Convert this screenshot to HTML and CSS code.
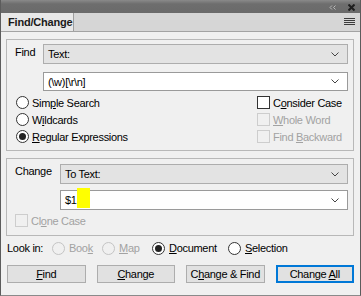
FILE: index.html
```html
<!DOCTYPE html>
<html>
  <head>
    <meta name="viewport" content="width=device-width, initial-scale=1.0" />
    <link rel="stylesheet" href="styles.css">
  </head>
  <body>
    <div class="panel">
      <div class="titlebar">
        <svg class="collapse" width="7" height="5" viewBox="0 0 7 5">
          <polyline points="3,0.5 1,2.5 3,4.5" fill="none" stroke="#b9b9b9" stroke-width="1" />
          <polyline points="6.5,0.5 4.5,2.5 6.5,4.5" fill="none" stroke="#b9b9b9" stroke-width="1" />
        </svg>
        <svg class="close" width="7" height="7" viewBox="0 0 7 7">
          <path d="M0.5 0.5 L6.5 6.5 M6.5 0.5 L0.5 6.5" stroke="#1e1e1e" stroke-width="2" />
        </svg>
      </div>
      <div class="tabbar">
        <div class="tab">Find/Change</div>
        <svg class="menu" width="11" height="8" viewBox="0 0 11 8">
          <path d="M0 0.5 H11 M0 2.5 H11 M0 4.5 H11 M0 6.5 H11" stroke="#3c3c3c" stroke-width="1" />
        </svg>
      </div>

      <div class="content">
        <div class="group find-group">
          <div class="field-row">
            <span class="group-label">Find</span>
            <div class="fields">
              <div class="combo combo-grey">
                <span>Text:</span>
                <svg class="chevron" width="8" height="5" viewBox="0 0 8 5"><polyline points="0.5,0.5 4,4 7.5,0.5" fill="none" stroke="#444" /></svg>
              </div>
              <div class="combo combo-white find-input">
                <span>(\w)[\r\n]</span>
                <svg class="chevron" width="8" height="5" viewBox="0 0 8 5"><polyline points="0.5,0.5 4,4 7.5,0.5" fill="none" stroke="#444" /></svg>
              </div>
            </div>
          </div>
          <div class="options">
            <div class="option-col">
              <div class="opt"><span class="radio"></span><span>Sim<u>p</u>le Search</span></div>
              <div class="opt"><span class="radio"></span><span>W<u>i</u>ldcards</span></div>
              <div class="opt"><span class="radio checked"></span><span><u>R</u>egular Expressions</span></div>
            </div>
            <div class="option-col check-col">
              <div class="opt"><span class="check"></span><span>C<u>o</u>nsider Case</span></div>
              <div class="opt disabled"><span class="check"></span><span><u>W</u>hole Word</span></div>
              <div class="opt disabled"><span class="check"></span><span>Find <u>B</u>ackward</span></div>
            </div>
          </div>
        </div>

        <div class="group change-group">
          <div class="field-row">
            <span class="group-label">Change</span>
            <div class="fields">
              <div class="combo combo-grey">
                <span>To Text:</span>
                <svg class="chevron" width="8" height="5" viewBox="0 0 8 5"><polyline points="0.5,0.5 4,4 7.5,0.5" fill="none" stroke="#444" /></svg>
              </div>
              <div class="combo combo-white change-input">
                <span class="input-text">$1<span class="highlight"></span></span>
                <svg class="chevron" width="8" height="5" viewBox="0 0 8 5"><polyline points="0.5,0.5 4,4 7.5,0.5" fill="none" stroke="#444" /></svg>
              </div>
            </div>
          </div>
          <div class="opt disabled clone"><span class="check"></span><span>Cl<u>o</u>ne Case</span></div>
        </div>

        <div class="look-in">
          <span class="look-label">Look in:</span>
          <div class="opt disabled book"><span class="radio"></span><span>Boo<u>k</u></span></div>
          <div class="opt disabled map"><span class="radio"></span><span><u>M</u>ap</span></div>
          <div class="opt doc"><span class="radio checked"></span><span><u>D</u>ocument</span></div>
          <div class="opt"><span class="radio"></span><span><u>S</u>election</span></div>
        </div>

        <div class="buttons">
          <div class="btn"><span><u>F</u>ind</span></div>
          <div class="btn"><span><u>C</u>hange</span></div>
          <div class="btn"><span>C<u>h</u>ange &amp; Find</span></div>
          <div class="btn default"><span>Change <u>A</u>ll</span></div>
        </div>
      </div>
    </div>
  </body>
</html>
```

FILE: styles.css
```css
body {
  margin: 0;
  background: #f0f0f0;
  font-family: "Liberation Sans", Arial, sans-serif;
  font-size: 11px;
  letter-spacing: -0.3px;
  color: #000;
}
u {
  text-decoration: underline;
  text-underline-offset: 1px;
}
.panel {
  width: 361px;
  height: 296px;
  box-sizing: border-box;
  border-left: 1px solid #5c5c5c;
  border-right: 1px solid #5c5c5c;
  border-bottom: 1px solid #8a8a8a;
  background: #f0f0f0;
}
.titlebar {
  height: 13px;
  background: linear-gradient(#8a8a8a, #6e6e6e 30%, #6a6a6a);
  display: flex;
  align-items: center;
  justify-content: flex-end;
  padding-right: 5px;
}
.collapse {
  margin-right: 12px;
  margin-top: 2px;
}
.close {
  margin-top: 1px;
}
.tabbar {
  height: 18px;
  background: #d6d6d6;
  border-bottom: 1px solid #a3a3a3;
  display: flex;
  align-items: stretch;
  justify-content: space-between;
}
.tab {
  width: 73px;
  background: #e8e8e8;
  border-right: 1px solid #9e9e9e;
  font-weight: bold;
  font-size: 11px;
  letter-spacing: -0.2px;
  color: #1a1a1a;
  display: flex;
  align-items: center;
  padding-left: 7px;
  box-sizing: border-box;
}
.menu {
  align-self: center;
  margin-right: 5px;
}
.content {
  padding: 7px 6px 0 5px;
}
.group {
  border: 1px solid #b8b8b8;
  padding: 4px 5px 0 8px;
}
.field-row {
  display: flex;
}
.group-label {
  width: 28px;
  padding-top: 2px;
  line-height: 13px;
}
.change-group .group-label {
  width: 45px;
  padding-top: 1px;
}
.fields {
  flex: 1;
  display: flex;
  flex-direction: column;
}
.combo {
  box-sizing: border-box;
  height: 20px;
  display: flex;
  align-items: center;
  justify-content: space-between;
  padding: 0 8px 0 4px;
  border: 1px solid #adadad;
}
.combo-grey {
  background: #e3e3e3;
}
.combo-white {
  background: #fff;
  border-color: #9a9a9a;
}
.find-input {
  margin-top: 8px;
  height: 19px;
}
.change-input {
  margin-top: 6px;
}
.input-text {
  display: flex;
  align-items: center;
}
.options {
  display: flex;
  justify-content: space-between;
  margin-top: 3px;
  padding-bottom: 5px;
}
.option-col {
  display: flex;
  flex-direction: column;
}
.check-col {
  width: 91px;
}
.opt {
  display: flex;
  align-items: center;
  height: 17px;
  white-space: nowrap;
}
.disabled {
  color: #a2a2a2;
}
.radio {
  box-sizing: border-box;
  width: 13px;
  height: 13px;
  border: 1px solid #333;
  border-radius: 50%;
  background: #fff;
  margin-right: 3px;
  display: flex;
  align-items: center;
  justify-content: center;
}
.disabled .radio {
  border-color: #c4c4c4;
  background: #f0f0f0;
}
.radio.checked::after {
  content: "";
  width: 7px;
  height: 7px;
  border-radius: 50%;
  background: #222;
}
.check {
  box-sizing: border-box;
  width: 13px;
  height: 13px;
  border: 1px solid #333;
  background: #fff;
  margin-right: 3px;
}
.disabled .check {
  border-color: #cdcdcd;
  background: #f0f0f0;
}
.find-group .option-col:first-child .opt {
  margin-left: 1px;
}
.change-group {
  margin-top: 7px;
  padding-top: 5px;
  padding-bottom: 7px;
}
.highlight {
  display: inline-block;
  width: 13px;
  height: 20px;
  background: #ffff00;
  margin-top: -5px;
  margin-left: 0;
}
.clone {
  margin-top: 3px;
  height: 15px;
}
.look-in {
  display: flex;
  align-items: center;
  height: 18px;
  margin-top: 3px;
  padding-left: 1px;
}
.look-label {
  width: 45px;
}
.look-in .opt {
  margin-right: 4px;
}
.look-in .radio {
  margin-right: 4px;
}
.book {
  width: 46px;
}
.map {
  width: 46px;
}
.doc {
  width: 72px;
}
.buttons {
  display: grid;
  grid-template-columns: repeat(4, 1fr);
  gap: 11px;
  margin-top: 8px;
  padding-left: 1px;
}
.btn {
  box-sizing: border-box;
  height: 18px;
  border: 1px solid #adadad;
  background: #e1e1e1;
  display: flex;
  align-items: center;
  justify-content: center;
}
.btn.default {
  border: 2px solid #0078d7;
}
```
